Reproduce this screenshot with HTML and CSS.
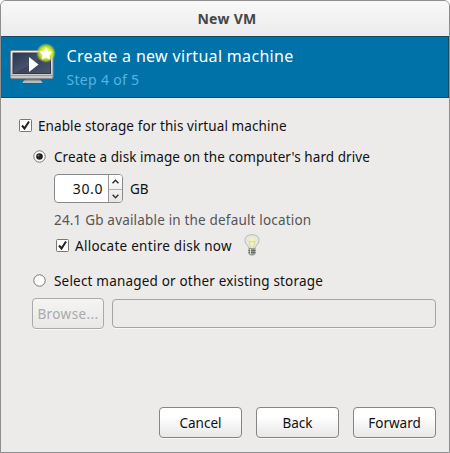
FILE: index.html
```html
<!DOCTYPE html>
<html lang="en">
<head>
<meta charset="utf-8">
<title>New VM</title>
<link rel="stylesheet" href="styles.css">
</head>
<body>
<div class="window">
  <div class="titlebar"><span>New VM</span></div>
  <header class="banner">
    <svg class="monitor" width="48" height="46" viewBox="0 0 48 46">
      <defs>
        <linearGradient id="screen" x1="0" y1="0" x2="1" y2="1"><stop offset="0" stop-color="#2c3650"/><stop offset=".5" stop-color="#46516a"/><stop offset=".52" stop-color="#3a455c"/><stop offset="1" stop-color="#4b566c"/></linearGradient>
        <linearGradient id="frame" x1="0" y1="0" x2="0" y2="1"><stop offset="0" stop-color="#f2f2f2"/><stop offset="1" stop-color="#c4c4c4"/></linearGradient>
        <radialGradient id="glow"><stop offset="0" stop-color="#ffff80"/><stop offset=".5" stop-color="#e4f02c"/><stop offset=".75" stop-color="#bfdc28" stop-opacity=".8"/><stop offset="1" stop-color="#a0cc30" stop-opacity="0"/></radialGradient>
      </defs>
      <path d="M17 34h13l1 4H16z" fill="#69747a"/>
      <path d="M15 37.500h17l2 3H13z" fill="#bcbcbc"/>
      <path d="M13 40.500h21" stroke="#345a6c"/>
      <rect x="1.500" y="7.500" width="42.500" height="28" rx="1.500" fill="url(#frame)" stroke="#858b8d"/>
      <path d="M2 32.500h42" stroke="#9b9b9b"/>
      <rect x="4" y="10" width="37.500" height="20.500" fill="url(#screen)" stroke="#30394e"/>
      <path d="M20 14v15l9.500-7.500z" fill="#fff"/>
      <circle cx="37" cy="10" r="10" fill="url(#glow)"/>
      <path d="M37 4.500l1.900 3.800 4.200.6-3 3 .7 4.300-3.800-2-3.800 2 .7-4.300-3-3 4.200-.6z" fill="#fff" stroke="#fff" stroke-width=".6"/>
    </svg>
    <div class="heading">
      <h1>Create a new virtual machine</h1>
      <p>Step 4 of 5</p>
    </div>
  </header>
  <main>
    <label class="row enable">
      <svg class="check" width="13" height="13" viewBox="0 0 13 13"><rect x=".5" y=".5" width="12" height="12" rx="1" fill="#fff" stroke="#777"/><path d="M3 6.500l2.500 3 4.500-7" fill="none" stroke="#222" stroke-width="2"/></svg>
      <span class="t-enable">Enable storage for this virtual machine</span>
    </label>
    <label class="row create">
      <svg class="radio" width="13" height="13" viewBox="0 0 13 13"><circle cx="6.500" cy="6.500" r="5.700" fill="#fff" stroke="#777"/><circle cx="6.500" cy="6.500" r="3.300" fill="#222"/><circle cx="5.500" cy="5.500" r="1" fill="#777"/></svg>
      <span class="t-create">Create a disk image on the computer's hard drive</span>
    </label>
    <div class="size">
      <div class="spin">
        <span class="value">30.0</span>
        <div class="arrows">
          <svg width="13" height="13" viewBox="0 0 13 13"><path d="M3.500 8l3-3 3 3" /></svg>
          <svg width="13" height="13" viewBox="0 0 13 13"><path d="M3.500 5l3 3 3-3" /></svg>
        </div>
      </div>
      <span class="unit">GB</span>
    </div>
    <p class="note">24.1 Gb available in the default location</p>
    <div class="row allocate">
      <svg class="check" width="13" height="13" viewBox="0 0 13 13"><rect x=".5" y=".5" width="12" height="12" rx="1" fill="#fff" stroke="#777"/><path d="M3 6.500l2.500 3 4.500-7" fill="none" stroke="#222" stroke-width="2"/></svg>
      <span class="t-allocate">Allocate entire disk now</span>
      <svg class="bulb" width="16" height="22" viewBox="0 0 16 22">
        <path d="M5 14.500C4.500 11 1 10.500 1 6.500C1 2.500 4 .7 8 .7s7 1.800 7 5.800c0 4-3.500 4.500-4 8z" fill="#e6e7df" stroke="#b6b7b0"/>
        <ellipse cx="8" cy="8" rx="3.500" ry="4" fill="#f5f2b5"/>
        <path d="M6.500 14L5 7l2 1 1-1 1 1 2-1-1.500 7" fill="none" stroke="#d2cf98" stroke-width=".8"/>
        <path d="M4.500 14h7v6l-2 1.500h-3l-2-1.500z" fill="#979b95"/>
        <path d="M4.500 16.500h7M4.500 18.500h7" stroke="#60665f"/>
        <path d="M6.500 15v5" stroke="#dedfdc"/>
      </svg>
    </div>
    <label class="row select">
      <svg class="radio" width="13" height="13" viewBox="0 0 13 13"><circle cx="6.500" cy="6.500" r="5.700" fill="#fff" stroke="#777"/></svg>
      <span class="t-select">Select managed or other existing storage</span>
    </label>
    <div class="path">
      <div class="btn browse"><span>Browse...</span></div>
      <div class="entry"></div>
    </div>
  </main>
  <footer>
    <div class="btn"><span class="t-cancel">Cancel</span></div>
    <div class="btn"><span class="t-back">Back</span></div>
    <div class="btn"><span class="t-forward">Forward</span></div>
  </footer>
</div>
</body>
</html>
```
FILE: styles.css
```css
* { box-sizing: border-box; }
body { margin: 0; background: #fff; font: 13.5px/20px "Noto Sans", "Open Sans", sans-serif; color: #111; white-space: nowrap; overflow: hidden; }
h1, p { margin: 0; font-weight: 400; }
svg { display: block; flex: none; }
.window { width: 450px; height: 453px; background: #ecebea; border: 1px solid #8e8e8e; border-radius: 6px 6px 0 0; overflow: hidden; display: flex; flex-direction: column; }
.titlebar { height: 35px; flex: none; padding: 8px 0 0 4px; background: linear-gradient(#f9f9f9, #ebebeb); text-align: center; font-size: 14px; font-weight: 700; color: #454748; letter-spacing: .3px; }
.banner { height: 62px; flex: none; display: flex; padding: 6px 0 0 7px; background: #0072a8; border: 1px solid #154b66; border-left-color: #315e73; }
.heading { padding: 2px 0 0 9.500px; }
.heading h1 { font-size: 16px; line-height: 22px; letter-spacing: .32px; color: #fff; }
.heading p { font-size: 14px; line-height: 22px; letter-spacing: .3px; color: #55b3e3; margin-top: 2px; }
main { display: flex; flex-direction: column; padding: 17px 13px 0 18px; }
.row { display: flex; height: 20px; align-items: center; }
.row span { padding-top: 1px; }
.check + span, .radio + span { margin-left: 6px; }
.create, .select { margin-left: 14px; }
.create { margin-top: 11px; }
.create span, .select span { margin-left: 8px; }
.t-enable { letter-spacing: .1px; }
.t-create { letter-spacing: .07px; }
.t-allocate { letter-spacing: .27px; }
.t-select { letter-spacing: .19px; }
.size { display: flex; margin: 8px 0 0 35px; height: 29px; }
.spin { width: 69px; display: flex; border: 1px solid #898989; border-radius: 4px; background: #fff; overflow: hidden; }
.value { width: 53px; padding: 4px 5px 0 0; text-align: right; font-size: 14px; letter-spacing: .6px; }
.arrows { width: 14px; border-left: 1px solid #999; background: linear-gradient(#fff, #e6e6e6); }
.arrows svg { height: 13.5px; fill: none; stroke: #333; stroke-width: 1.5; }
.arrows svg + svg { border-top: 1px solid #b3b3b3; }
.unit { margin: 5px 0 0 7px; }
.note { margin: 7px 0 0 35px; color: #555; letter-spacing: .18px; }
.allocate { margin: 5px 0 0 37px; }
.bulb { margin-left: 12px; }
.select { margin-top: 15px; }
.path { display: flex; margin: 8px 0 0 13px; height: 31px; }
.btn { width: 83px; height: 31px; display: flex; justify-content: center; padding-top: 5px; border: 1px solid #858585; border-radius: 4px; background: linear-gradient(#fff 30%, #e8e7e6); box-shadow: 0 1px #f7f7f7; }
.browse { width: 72px; letter-spacing: .4px; border-color: #aaa; color: #aaa; background: linear-gradient(#f4f4f3, #e9e8e7); }
.entry { flex: 1; margin: 1px 0 1px 8px; border: 1px solid #a4a4a4; border-radius: 4px; box-shadow: 0 1px #f7f7f7; }
footer { display: flex; justify-content: flex-end; gap: 14px; margin: auto 13px 14px 0; }
```
